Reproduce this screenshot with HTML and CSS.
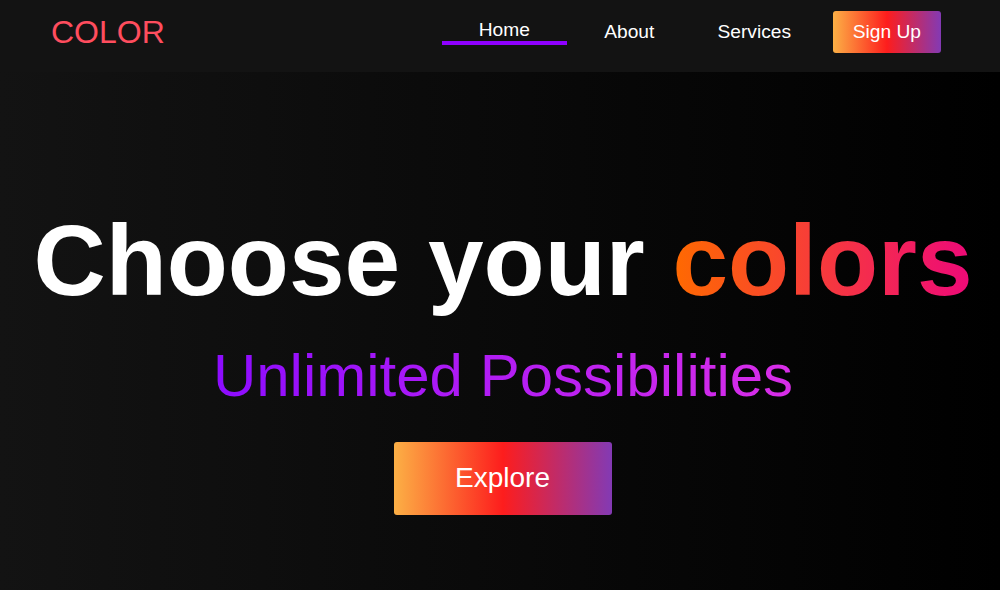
FILE: index.html
```html
<!DOCTYPE html>
<html lang="en">
<head>
<meta charset="utf-8">
<title>COLOR</title>
<link rel="stylesheet" href="styles.css">
</head>
<body>
<header class="navbar">
  <div class="logo">COLOR</div>
  <nav class="nav-links">
    <a class="nav-link active" href="#">Home</a>
    <a class="nav-link" href="#">About</a>
    <a class="nav-link" href="#">Services</a>
    <a class="btn btn-signup" href="#">Sign Up</a>
  </nav>
</header>
<main class="hero">
  <h1 class="hero-title">Choose your <span class="grad-text">colors</span></h1>
  <h2 class="hero-sub">Unlimited Possibilities</h2>
  <a class="btn btn-explore" href="#">Explore</a>
</main>
</body>
</html>
```
FILE: styles.css
```css
* { box-sizing: border-box; }
html, body { margin: 0; padding: 0; }
body {
  font-family: "Liberation Sans", Arial, sans-serif;
  background: #000;
  color: #fff;
  width: 1000px;
  height: 590px;
  overflow: hidden;
}
a { text-decoration: none; color: #fff; }

.navbar {
  height: 72px;
  background: #131313;
  display: flex;
  align-items: center;
  justify-content: space-between;
  padding: 0 59px 8px 51px;
}
.logo {
  font-size: 32px;
  color: #ff4d5e;
}
.nav-links {
  display: flex;
  align-items: center;
}
.nav-link {
  width: 125px;
  text-align: center;
  font-size: 19.2px;
}
.nav-link.active {
  border-bottom: 4px solid #8f00ff;
}
.btn {
  background: linear-gradient(to right, #fcb045, #fd1d1d, #833ab4);
  border-radius: 3px;
  color: #fff;
}
.btn-signup {
  margin-left: 16px;
  font-size: 19.2px;
  padding: 10px 20px;
}

.hero {
  height: 518px;
  background: linear-gradient(to right, #131313, #000);
  display: flex;
  flex-direction: column;
  align-items: center;
  padding: 131px 0 0 6px;
}
.hero-title {
  margin: 0;
  font-size: 100px;
  font-weight: bold;
  line-height: 115px;
  color: #fff;
  white-space: nowrap;
}
.grad-text {
  background: linear-gradient(to right, #ff6a00, #ee0979);
  -webkit-background-clip: text;
  background-clip: text;
  color: transparent;
}
.hero-sub {
  margin: 23px 0 0;
  font-size: 60px;
  font-weight: normal;
  line-height: 69px;
  background: linear-gradient(to right, #8d0cff, #d92ee8);
  -webkit-background-clip: text;
  background-clip: text;
  color: transparent;
}
.btn-explore {
  margin-top: 32px;
  font-size: 28px;
  line-height: 32px;
  padding: 20px 62px 21px 61px;
}
```
